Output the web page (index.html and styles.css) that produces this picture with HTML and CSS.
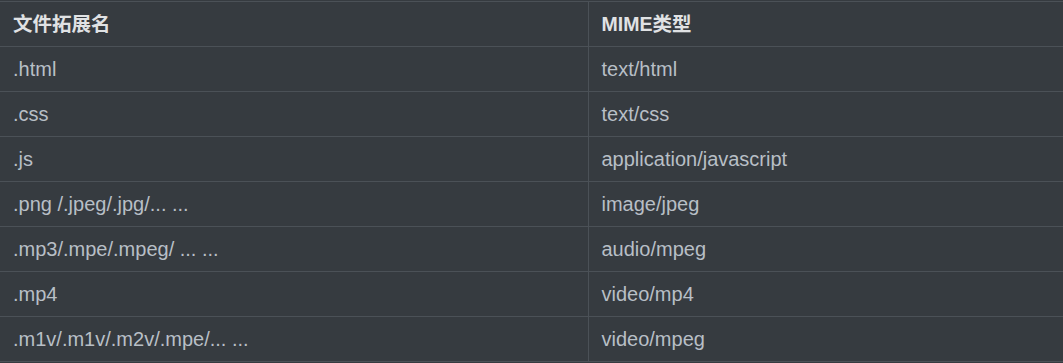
FILE: index.html
```html
<!DOCTYPE html>
<html lang="zh">
<head>
<meta charset="utf-8">
<link rel="stylesheet" href="styles.css">
</head>
<body>
<table class="mime-table">
  <colgroup>
    <col class="col-ext">
    <col class="col-mime">
  </colgroup>
  <thead>
    <tr><th>文件拓展名</th><th>MIME类型</th></tr>
  </thead>
  <tbody>
    <tr><td>.html</td><td>text/html</td></tr>
    <tr><td>.css</td><td>text/css</td></tr>
    <tr><td>.js</td><td>application/javascript</td></tr>
    <tr><td>.png /.jpeg/.jpg/... ...</td><td>image/jpeg</td></tr>
    <tr><td>.mp3/.mpe/.mpeg/ ... ...</td><td>audio/mpeg</td></tr>
    <tr><td>.mp4</td><td>video/mp4</td></tr>
    <tr><td>.m1v/.m1v/.m2v/.mpe/... ...</td><td>video/mpeg</td></tr>
  </tbody>
</table>
</body>
</html>
```

FILE: styles.css
```css
html, body {
  margin: 0;
  padding: 0;
  background: #363b40;
}
body {
  padding-top: 1px;
  font-family: "Liberation Sans", Arial, "Noto Sans CJK SC", sans-serif;
  color: #b8bfc6;
}
.mime-table {
  width: 1063px;
  border-collapse: collapse;
  table-layout: fixed;
}
.col-ext { width: 588px; }
.col-mime { width: 475px; }
.mime-table tr {
  height: 45px;
  border-top: 1px solid #4b5157;
  border-bottom: 1px solid #4b5157;
}
.mime-table th,
.mime-table td {
  padding: 0 12px 0 13px;
  text-align: left;
  vertical-align: middle;
  white-space: nowrap;
  border-left: 1px solid #4b5157;
  line-height: 24px;
}
.mime-table th:first-child,
.mime-table td:first-child {
  border-left: none;
}
.mime-table th {
  font-size: 19.5px;
  font-weight: bold;
  color: #e0e2e4;
}
.mime-table td {
  font-size: 20px;
}
```
